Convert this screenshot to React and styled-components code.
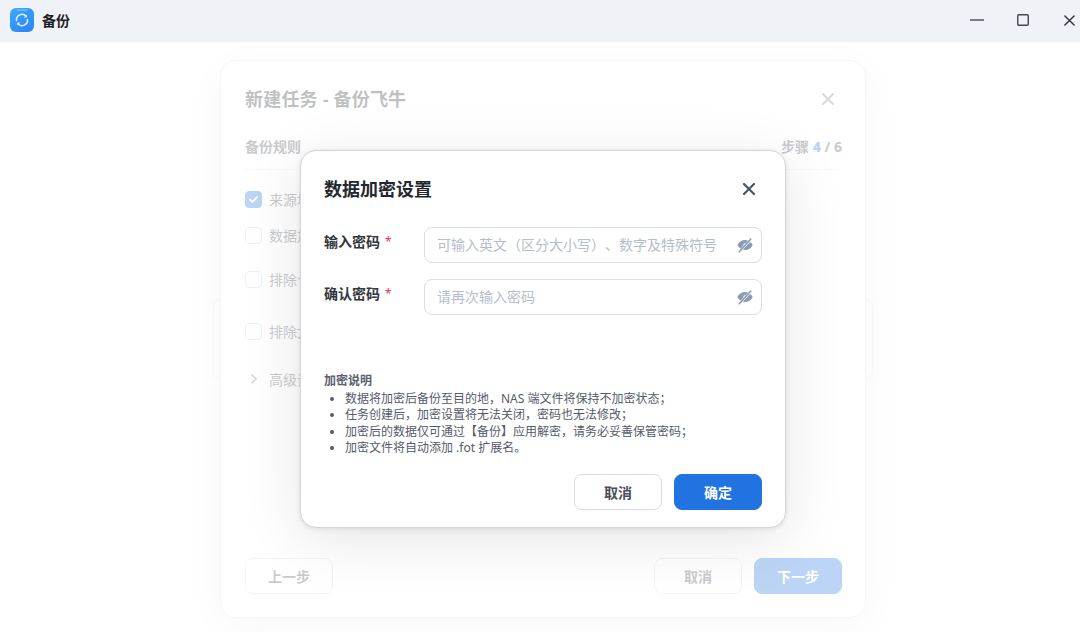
import React from 'react';
import styled, { createGlobalStyle } from 'styled-components';

const Global = createGlobalStyle`
  html, body { margin: 0; padding: 0; background: #fff; }
  body { font-family: "Noto Sans", "Noto Sans CJK SC", sans-serif; text-spacing-trim: space-all; font-feature-settings: "chws" 0; }
  * { box-sizing: border-box; }
`;
const Page = styled.div`
  width: 1080px; height: 632px; position: relative; overflow: hidden;
  display: flex; flex-direction: column; background: #fff;
`;
const TitleBar = styled.header`
  height: 42px; flex: none; background: #eff3f8; display: flex; align-items: center;
  padding: 0 0 2px 10px; position: relative; z-index: 3;
`;
const AppName = styled.span`
  margin-left: 8px; font-size: 14px; font-weight: 700; color: #1f2126; flex: 1;
`;
const WinControls = styled.div`display: flex; align-items: center; gap: 24px;`;
const WinBtn = styled.span`
  width: 22px; height: 22px; display: flex; align-items: center; justify-content: center;
`;
const Main = styled.main`
  flex: 1; display: flex; align-items: flex-start; justify-content: center;
  padding: 18px 0 0 6px; position: relative;
`;
const Panel = styled.section`
  width: 646px; height: 558px; background: #fff; border-radius: 16px; border: 1px solid #e4e5e8;
  box-shadow: 0 8px 40px rgba(0,0,0,.1);
  padding: 23px 23px 23px 24px; display: flex; flex-direction: column;
`;
const PanelHead = styled.div`
  display: flex; align-items: center; justify-content: space-between; height: 30px;
`;
const PanelTitle = styled.h2`
  margin: 0; font-size: 18px; font-weight: 700; color: #2a2d33; line-height: 30px; letter-spacing: .2px;
`;
const PanelClose = styled.span`display: flex; align-items: center; justify-content: center; margin-right: 8px;`;
const StepRow = styled.div`
  margin-top: 20px; height: 36px; padding-bottom: 12px; border-bottom: 1px solid #e8ebf0;
  display: flex; justify-content: space-between; align-items: center;
  font-size: 14px; font-weight: 700; color: #4a4e57;
`;
const StepNum = styled.b`color: #1f72e2;`;
const Options = styled.div`flex: 1; padding-top: 19px; display: flex; flex-direction: column;`;
const Option = styled.div`
  display: flex; align-items: center; gap: 7px; height: 20px; margin-bottom: ${p => p.$gap}px;
  font-size: 14px; color: #4a4e57; white-space: nowrap;
`;
const OptionText = styled.span`width: 31px; overflow: hidden;`;
const Box = styled.span`
  width: 17px; height: 17px; border-radius: 4px; flex: none;
  border: 1.5px solid ${p => p.$on ? '#1f72e2' : '#c9ced8'};
  background: ${p => p.$on ? '#1f72e2' : '#fff'};
  display: flex; align-items: center; justify-content: center;
`;
const Chevron = styled.span`width: 17px; display: flex; justify-content: center; flex: none;`;
const PanelFoot = styled.footer`display: flex; align-items: center; gap: 12px;`;
const Spacer = styled.span`flex: 1;`;
const Btn = styled.button`
  width: 88px; height: 36px; border-radius: 8px; font: 700 14px "Noto Sans", "Noto Sans CJK SC", sans-serif;
  padding: 0; cursor: pointer;
  border: 1px solid ${p => p.$primary ? '#2173e1' : '#d3dbe8'};
  background: ${p => p.$primary ? '#2173e1' : '#fff'};
  color: ${p => p.$primary ? '#fff' : '#4a4e57'};
`;
const BackCard = styled.div`
  position: absolute; left: 213px; top: 300px; width: 660px; height: 78px;
  border: 1px solid #e8eaee; border-radius: 6px; z-index: 0; pointer-events: none;
  box-shadow: 0 2px 10px rgba(0,0,0,.06);
`;
const PanelWrap = styled.div`position: relative; z-index: 1;`;
const Scrim = styled.div`
  position: absolute; inset: 42px 0 0 0; background: rgba(255,255,255,.7); z-index: 2;
`;
const Modal = styled.section`
  position: absolute; left: 300px; top: 150px; width: 486px; height: 378px; z-index: 3;
  background: #fff; border: 1px solid #d2d5dc; border-radius: 16px;
  box-shadow: 0 1px 5px rgba(0,0,0,.1), 0 12px 60px rgba(0,0,0,.1);
  padding: 23px 23px 17px; display: flex; flex-direction: column;
`;
const ModalHead = styled.div`
  display: flex; align-items: center; justify-content: space-between; height: 30px; padding-right: 7px;
`;
const ModalTitle = styled.h3`margin: 0; padding-bottom: 2px; font-size: 18px; font-weight: 700; color: #24272c;`;
const IconBtn = styled.span`display: flex; align-items: center; justify-content: center;`;
const Form = styled.div`
  margin-top: 23px; display: flex; flex-direction: column; gap: 16px;
`;
const Field = styled.div`display: flex; align-items: flex-start;`;
const Label = styled.label`
  width: 100px; flex: none; font-size: 14px; font-weight: 700; color: #33363c; line-height: 30px;
  display: flex; align-items: center;
`;
const Star = styled.span`color: #f0304a; margin-left: 5px; font-size: 12px; font-weight: 400; line-height: 12px;`;
const InputBox = styled.div`
  flex: 1; height: 36px; border: 1px solid #d8deea; border-radius: 8px; background: #fff;
  display: flex; align-items: center; padding: 0 8px 1px 12px;
`;
const Input = styled.input`
  flex: 1; min-width: 0; border: 0; outline: 0; padding: 0; background: transparent;
  font: 14px "Noto Sans", "Noto Sans CJK SC", sans-serif; color: #333;
  &::placeholder { color: #b5bdcb; opacity: 1; }
`;
const Notes = styled.div`margin-top: 58px; flex: 1;`;
const NotesTitle = styled.div`font-size: 12px; font-weight: 700; color: #5a6070; line-height: 16px;`;
const NoteList = styled.ul`
  margin: 2px 0 0; padding: 0 0 0 21px; font-size: 12px; line-height: 16.4px; color: #555b69;
`;
const ModalFoot = styled.footer`display: flex; justify-content: flex-end; gap: 12px;`;

const EyeOff = () => (
  <svg width="16" height="16" viewBox="0 0 16 16" aria-hidden="true">
    <path d="M.4 8C2.100 4.700 4.900 3 8 3c1.300 0 2.500.3 3.600.9L3.900 11.800C2.500 11 1.300 9.700.4 8z" fill="#8b9ab5" />
    <path d="M5.500 12.600l7.500-7.600c1.100.7 2 1.700 2.700 3-1.700 3.300-4.600 5-7.700 5-.9 0-1.700-.1-2.500-.4z" fill="#8b9ab5" />
    <circle cx="8" cy="8" r="1.700" fill="#fff" />
    <path d="M2.500 14.500L14 2" stroke="#fff" strokeWidth="2.200" />
    <path d="M2.300 14.700L13.800 2" stroke="#8b9ab5" strokeWidth="1.600" strokeLinecap="round" />
  </svg>
);
const Cross = ({ size = 12, color = '#4b5262', w = 2 }) => (
  <svg width={size} height={size} viewBox="0 0 12 12" aria-hidden="true">
    <path d="M1 1l10 10M11 1L1 11" stroke={color} strokeWidth={w} strokeLinecap="round" />
  </svg>
);

export default function App() {
  return (
    <Page>
      <Global />
      <TitleBar>
        <svg width="24" height="24" viewBox="0 0 24 24" aria-hidden="true">
          <defs>
            <linearGradient id="appg" x1="0.2" y1="0" x2="0.8" y2="1">
              <stop offset="0" stopColor="#3aa5fb" />
              <stop offset="1" stopColor="#2f86f5" />
            </linearGradient>
          </defs>
          <rect width="24" height="24" rx="6" fill="url(#appg)" />
          <path d="M7 2h10" stroke="#8fcbfd" strokeWidth="1" strokeLinecap="round" />
          <path d="M6.500 12.500A5.500 5.500 0 0 1 16 8.200" fill="none" stroke="#dff0ff" strokeWidth="1.500" strokeLinecap="round" />
          <path d="M17.500 11.500A5.500 5.500 0 0 1 8 15.800" fill="none" stroke="#dff0ff" strokeWidth="1.500" strokeLinecap="round" />
          <path d="M16.800 6.500v3h-3z" fill="#dff0ff" />
          <path d="M7.200 17.500v-3h3z" fill="#dff0ff" />
        </svg>
        <AppName>备份</AppName>
        <WinControls>
          <WinBtn>
            <svg width="16" height="2" viewBox="0 0 16 2" aria-hidden="true"><path d="M1 1h14" stroke="#55585f" strokeWidth="1.500" /></svg>
          </WinBtn>
          <WinBtn>
            <svg width="12" height="12" viewBox="0 0 12 12" aria-hidden="true"><rect x=".75" y=".75" width="10.500" height="10.500" rx="1" fill="none" stroke="#44474e" strokeWidth="1.400" /></svg>
          </WinBtn>
          <WinBtn>
            <Cross size={11} color="#33363c" w={1.600} />
          </WinBtn>
        </WinControls>
      </TitleBar>
      <Main>
        <PanelWrap>
          <Panel>
            <PanelHead>
              <PanelTitle>新建任务 - 备份飞牛</PanelTitle>
              <PanelClose><Cross size={12} color="#7a7f8a" w={1.800} /></PanelClose>
            </PanelHead>
            <StepRow>
              <span>备份规则</span>
              <span>步骤 <StepNum>4</StepNum> / 6</span>
            </StepRow>
            <Options>
              <Option $gap={16}>
                <Box $on>
                  <svg width="11" height="11" viewBox="0 0 11 11" aria-hidden="true"><path d="M2 5.500l2.500 2.500L9 3" fill="none" stroke="#fff" strokeWidth="1.800" strokeLinecap="round" strokeLinejoin="round" /></svg>
                </Box>
                <OptionText>来源块级增量备份</OptionText>
              </Option>
              <Option $gap={24}><Box /><OptionText>数据加密设置</OptionText></Option>
              <Option $gap={32}><Box /><OptionText>排除个人文件</OptionText></Option>
              <Option $gap={28}><Box /><OptionText>排除大文件</OptionText></Option>
              <Option $gap={0}>
                <Chevron>
                  <svg width="8" height="12" viewBox="0 0 8 12" aria-hidden="true"><path d="M2 2l4 4-4 4" fill="none" stroke="#6b7080" strokeWidth="1.500" strokeLinecap="round" strokeLinejoin="round" /></svg>
                </Chevron>
                <OptionText>高级设置</OptionText>
              </Option>
            </Options>
            <PanelFoot>
              <Btn>上一步</Btn>
              <Spacer />
              <Btn>取消</Btn>
              <Btn $primary>下一步</Btn>
            </PanelFoot>
          </Panel>
        </PanelWrap>
      </Main>
      <BackCard />
      <Scrim />
      <Modal>
        <ModalHead>
          <ModalTitle>数据加密设置</ModalTitle>
          <IconBtn><Cross size={12} color="#4b5262" w={2.200} /></IconBtn>
        </ModalHead>
        <Form>
          <Field>
            <Label>输入密码<Star>*</Star></Label>
            <InputBox>
              <Input placeholder="可输入英文（区分大小写）、数字及特殊符号" />
              <EyeOff />
            </InputBox>
          </Field>
          <Field>
            <Label>确认密码<Star>*</Star></Label>
            <InputBox>
              <Input placeholder="请再次输入密码" />
              <EyeOff />
            </InputBox>
          </Field>
        </Form>
        <Notes>
          <NotesTitle>加密说明</NotesTitle>
          <NoteList>
            <li>数据将加密后备份至目的地，NAS 端文件将保持不加密状态；</li>
            <li>任务创建后，加密设置将无法关闭，密码也无法修改；</li>
            <li>加密后的数据仅可通过【备份】应用解密，请务必妥善保管密码；</li>
            <li>加密文件将自动添加 .fot 扩展名。</li>
          </NoteList>
        </Notes>
        <ModalFoot>
          <Btn>取消</Btn>
          <Btn $primary>确定</Btn>
        </ModalFoot>
      </Modal>
    </Page>
  );
}
